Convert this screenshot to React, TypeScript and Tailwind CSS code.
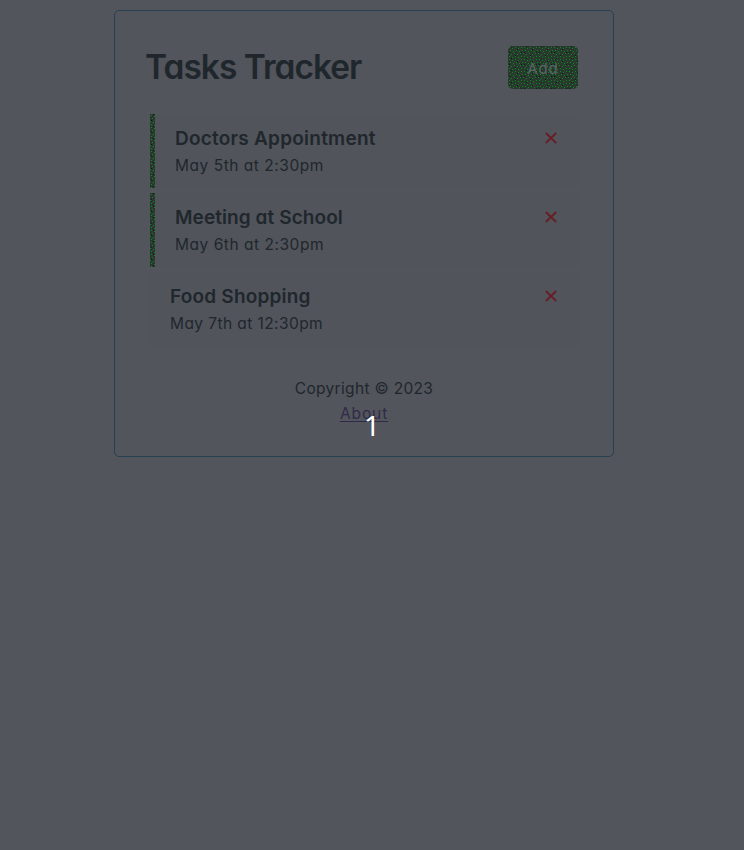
const tasks = [
  { title: 'Doctors Appointment', day: 'May 5th at 2:30pm', reminder: true, ts: 'tracking-[0.23px]', ds: 'tracking-[0.53px]' },
  { title: 'Meeting at School', day: 'May 6th at 2:30pm', reminder: true, ts: 'tracking-[0.08px]', ds: 'tracking-[0.53px]' },
  { title: 'Food Shopping', day: 'May 7th at 12:30pm', reminder: false, ts: 'tracking-[0.2px]', ds: 'tracking-[0.42px]' },
];

function Dither({ id }: { id: string }) {
  return (
    <svg className="absolute inset-0 h-full w-full" shapeRendering="crispEdges" aria-hidden="true">
      <defs>
        <pattern id={id} width="15" height="12" patternUnits="userSpaceOnUse">
          <path
            fill="#078c18"
            d="M1 1h1v1h-1zM4 2h1v1h-1zM7 1h1v1h-1zM10 2h1v1h-1zM13 1h1v1h-1zM2 4h1v1h-1zM5 5h1v1h-1zM8 4h1v1h-1zM11 5h1v1h-1zM14 4h1v1h-1zM0 7h1v1h-1zM3 8h1v1h-1zM6 7h1v1h-1zM9 8h1v1h-1zM12 7h1v1h-1zM1 10h1v1h-1zM4 11h1v1h-1zM7 10h1v1h-1zM10 11h1v1h-1zM13 10h1v1h-1z"
          />
          <path fill="#12191f" d="M3 0h1v1h-1zM9 3h1v1h-1zM1 6h1v1h-1zM13 6h1v1h-1zM7 9h1v1h-1z" />
          <path fill="#34443b" d="M6 3h1v1h-1zM12 3h1v1h-1zM4 6h1v1h-1zM10 6h1v1h-1zM2 9h1v1h-1zM11 0h1v1h-1z" />
        </pattern>
      </defs>
      <rect width="100%" height="100%" fill={`url(#${id})`} />
    </svg>
  );
}

export default function App() {
  return (
    <div className="relative h-[850px] w-[744px] overflow-hidden bg-[#52555c] pt-2.5 font-[Inter,sans-serif] text-[#20272c] [font-feature-settings:'cv11','ss03']">
      <main className="ml-[114px] h-[447px] w-[500px] rounded-[5px] border border-[#293f52] px-[30px] pt-[35px]">
        <header className="flex h-[43px] items-center justify-between pr-[5px]">
          <h1 className="whitespace-nowrap text-[33.5px] leading-[43px] font-[560] tracking-[-1px]">Tasks Tracker</h1>
          <button className="relative h-[43px] w-[70px] overflow-hidden rounded-[5px] bg-[#29382e] pt-[3px] text-[15px] text-[#596466]">
            <Dither id="button-dots" />
            <span className="relative tracking-[0.9px]">Add</span>
          </button>
        </header>
        <section className="mt-[25px] flex flex-col gap-[5px] px-[5px]">
          {tasks.map((task, i) => (
            <article key={task.title} className="flex h-[74px] bg-[#51545b]">
              {task.reminder && (
                <div className="relative w-[5px] bg-[#29382e]">
                  <Dither id={`task-dots-${i}`} />
                </div>
              )}
              <div className="flex flex-1 justify-between px-5 pt-2.5">
                <div className="whitespace-nowrap pt-px">
                  <h3 className={`text-[19px] leading-[28px] font-[560] ${task.ts}`}>{task.title}</h3>
                  <p className={`text-[15.5px] leading-[26px] ${task.ds}`}>{task.day}</p>
                </div>
                <svg className="mt-2 mr-[1px] h-3 w-3" viewBox="0 0 12 12" fill="none" stroke="#681d25" strokeWidth="1.8">
                  <path d="M.8 1 11.2 11M11.2 1 .8 11" />
                </svg>
              </div>
            </article>
          ))}
        </section>
        <footer className="mt-[30px] text-center text-[15.5px] leading-[25px]">
          <p className="tracking-[0.33px]">Copyright © 2023</p>
          <a className="tracking-[0.9px] text-[#2e2b49] underline decoration-1 underline-offset-2">About</a>
        </footer>
      </main>
      <div className="absolute top-[408px] left-0 w-full text-center font-['Noto_Sans',sans-serif] text-[28px] leading-[34px] text-white">1</div>
    </div>
  );
}
